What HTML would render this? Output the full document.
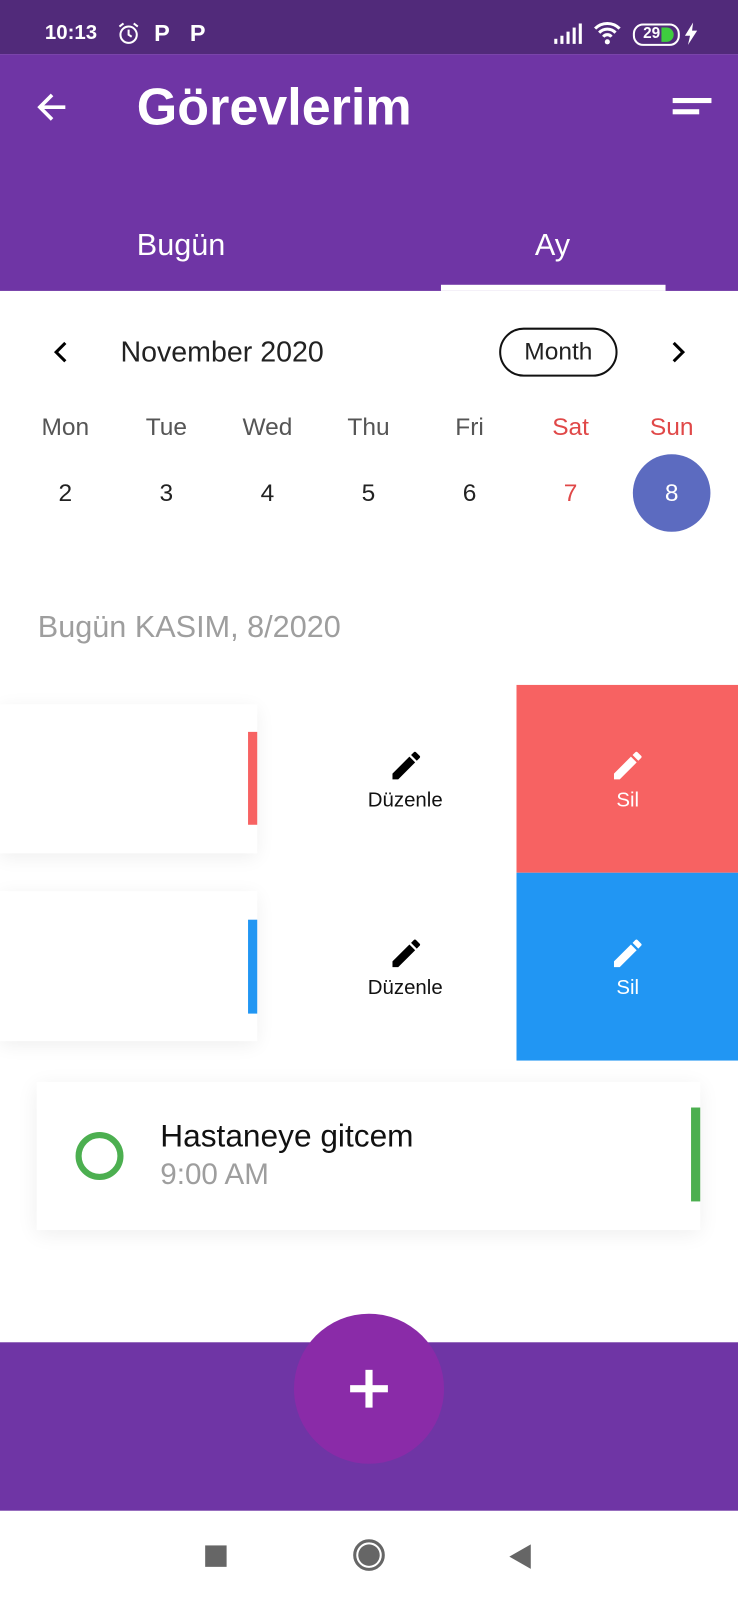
<!DOCTYPE html>
<html><head><meta charset="utf-8"><style>
html,body{margin:0;padding:0;width:738px;height:1600px;overflow:hidden;background:#fff}
#w{position:absolute;left:0;top:0;width:723px;height:1568px;transform:scale(1.02075);transform-origin:0 0;font-family:"Liberation Sans",sans-serif;}
.a{position:absolute}
.c{position:absolute;text-align:center}
</style></head><body><div id="w">
<div class="a" style="left:0;top:0;width:723px;height:53px;background:#512a7a"></div>
<div class="a" style="left:44px;top:21px;color:#fff;font-size:20px;font-weight:bold">10:13</div>
<svg class="a" style="left:114px;top:20px" width="24" height="26" viewBox="0 0 24 26"><circle cx="12" cy="14" r="8" fill="none" stroke="#fff" stroke-width="2"/><path d="M12 9v5l3 2M3 6l4-3M21 6l-4-3" stroke="#fff" stroke-width="2" fill="none"/></svg>
<div class="a" style="left:151px;top:19px;color:#fff;font-size:23px;font-weight:bold">P</div>
<div class="a" style="left:186px;top:19px;color:#fff;font-size:23px;font-weight:bold">P</div>
<svg class="a" style="left:542px;top:22px" width="30" height="22"><rect x="1" y="16" width="3" height="5" fill="#fff"/><rect x="7" y="13" width="3" height="8" fill="#fff"/><rect x="13" y="9" width="3" height="12" fill="#fff"/><rect x="19" y="5" width="3" height="16" fill="#fff"/><rect x="25" y="1" width="3" height="20" fill="#fff"/></svg>
<svg class="a" style="left:581px;top:20px" width="28" height="24" viewBox="0 0 28 24"><path d="M2 8a17 17 0 0 1 24 0M6 12a11 11 0 0 1 16 0M10 16a5 5 0 0 1 8 0" stroke="#fff" stroke-width="3" fill="none"/><circle cx="14" cy="21" r="2.5" fill="#fff"/></svg>
<div class="a" style="left:620px;top:23px;width:42px;height:18px;border:2px solid #fff;border-radius:10px;"></div>
<div class="a" style="left:648px;top:27px;width:12px;height:14px;background:#3ecc3e;border-radius:0 7px 7px 0"></div>
<div class="a" style="left:630px;top:24px;color:#fff;font-size:15px;font-weight:bold">29</div>
<svg class="a" style="left:669px;top:21px" width="16" height="24" viewBox="0 0 16 24"><path d="M10 1L2 14h5l-2 9 9-14H9z" fill="#fff"/></svg>
<div class="a" style="left:0;top:53px;width:723px;height:232px;background:#6f35a5"></div>
<svg class="a" style="left:34px;top:88px" width="34" height="34" viewBox="0 0 34 34"><path d="M30 17H5M17 5L5 17l12 12" stroke="#fff" stroke-width="3.5" fill="none"/></svg>
<div class="a" style="left:134px;top:75px;color:#fff;font-size:51px;font-weight:bold">Görevlerim</div>
<div class="a" style="left:659px;top:96px;width:38px;height:5px;background:#fff"></div>
<div class="a" style="left:659px;top:107px;width:26px;height:5px;background:#fff"></div>
<div class="a" style="left:134px;top:224px;color:#fff;font-size:30px">Bugün</div>
<div class="a" style="left:524px;top:224px;color:#fff;font-size:30px">Ay</div>
<div class="a" style="left:432px;top:279px;width:220px;height:6px;background:#fff"></div>
<svg class="a" style="left:48px;top:332px" width="24" height="26"><path d="M16 4L7 13l9 9" stroke="#000" stroke-width="3" fill="none"/></svg>
<div class="a" style="left:118px;top:329px;font-size:28px;color:#222">November 2020</div>
<div class="a" style="left:489px;top:321px;width:112px;height:44px;border:2px solid #111;border-radius:24px;text-align:center;line-height:44px;font-size:24px;color:#222">Month</div>
<svg class="a" style="left:652px;top:332px" width="24" height="26"><path d="M8 4l9 9-9 9" stroke="#000" stroke-width="3" fill="none"/></svg>
<div class="a" style="left:0;top:405px;width:723px;font-size:24px;color:#555">
<span class="c" style="left:14px;width:100px">Mon</span><span class="c" style="left:113px;width:100px">Tue</span><span class="c" style="left:212px;width:100px">Wed</span><span class="c" style="left:311px;width:100px">Thu</span><span class="c" style="left:410px;width:100px">Fri</span><span class="c" style="left:509px;width:100px;color:#e04848">Sat</span><span class="c" style="left:608px;width:100px;color:#e04848">Sun</span></div>
<div class="a" style="left:620px;top:445px;width:76px;height:76px;border-radius:50%;background:#5c6bc0"></div>
<div class="a" style="left:0;top:470px;width:723px;font-size:24px;color:#222">
<span class="c" style="left:14px;width:100px">2</span><span class="c" style="left:113px;width:100px">3</span><span class="c" style="left:212px;width:100px">4</span><span class="c" style="left:311px;width:100px">5</span><span class="c" style="left:410px;width:100px">6</span><span class="c" style="left:509px;width:100px;color:#e04848">7</span><span class="c" style="left:608px;width:100px;color:#fff">8</span></div>
<div class="a" style="left:37px;top:598px;font-size:30px;color:#9e9e9e">Bugün KASIM, 8/2020</div>
<div class="a" style="left:0;top:690px;width:252px;height:146px;background:#fff;box-shadow:0 4px 18px rgba(0,0,0,.07)"></div>
<div class="a" style="left:243px;top:717px;width:9px;height:91px;background:#f76262"></div>
<div class="a" style="left:0;top:873px;width:252px;height:147px;background:#fff;box-shadow:0 4px 18px rgba(0,0,0,.07)"></div>
<div class="a" style="left:243px;top:901px;width:9px;height:92px;background:#2196f3"></div>
<div class="a" style="left:506px;top:671px;width:217px;height:184px;background:#f76262"></div>
<div class="a" style="left:506px;top:855px;width:217px;height:184px;background:#2196f3"></div>
<svg class="a" style="left:380px;top:732px" width="36" height="36" viewBox="0 0 24 24"><path d="M3 17.25V21h3.75L17.81 9.94l-3.75-3.75L3 17.25zM20.71 7.04a1 1 0 0 0 0-1.41l-2.34-2.34a1 1 0 0 0-1.41 0l-1.83 1.83 3.75 3.75 1.83-1.83z" fill="#000"/></svg>
<svg class="a" style="left:380px;top:916px" width="36" height="36" viewBox="0 0 24 24"><path d="M3 17.25V21h3.75L17.81 9.94l-3.75-3.75L3 17.25zM20.71 7.04a1 1 0 0 0 0-1.41l-2.34-2.34a1 1 0 0 0-1.41 0l-1.83 1.83 3.75 3.75 1.83-1.83z" fill="#000"/></svg>
<svg class="a" style="left:597px;top:732px" width="36" height="36" viewBox="0 0 24 24"><path d="M3 17.25V21h3.75L17.81 9.94l-3.75-3.75L3 17.25zM20.71 7.04a1 1 0 0 0 0-1.41l-2.34-2.34a1 1 0 0 0-1.41 0l-1.83 1.83 3.75 3.75 1.83-1.83z" fill="#fff"/></svg>
<svg class="a" style="left:597px;top:916px" width="36" height="36" viewBox="0 0 24 24"><path d="M3 17.25V21h3.75L17.81 9.94l-3.75-3.75L3 17.25zM20.71 7.04a1 1 0 0 0 0-1.41l-2.34-2.34a1 1 0 0 0-1.41 0l-1.83 1.83 3.75 3.75 1.83-1.83z" fill="#fff"/></svg>
<div class="c" style="left:337px;top:773px;width:120px;font-size:20px;color:#111">Düzenle</div>
<div class="c" style="left:337px;top:957px;width:120px;font-size:20px;color:#111">Düzenle</div>
<div class="c" style="left:555px;top:773px;width:120px;font-size:20px;color:#fff">Sil</div>
<div class="c" style="left:555px;top:957px;width:120px;font-size:20px;color:#fff">Sil</div>
<div class="a" style="left:36px;top:1060px;width:650px;height:145px;background:#fff;box-shadow:0 4px 20px rgba(0,0,0,.07)"></div>
<div class="a" style="left:74px;top:1109px;width:35px;height:35px;border:6px solid #4caf50;border-radius:50%"></div>
<div class="a" style="left:157px;top:1095px;font-size:31px;color:#111">Hastaneye gitcem</div>
<div class="a" style="left:157px;top:1135px;font-size:29px;color:#9e9e9e">9:00 AM</div>
<div class="a" style="left:677px;top:1085px;width:9px;height:92px;background:#4caf50"></div>
<div class="a" style="left:0;top:1315px;width:723px;height:165px;background:#6f35a5"></div>
<div class="a" style="left:288px;top:1287px;width:147px;height:147px;border-radius:50%;background:#8a2ba8"></div>
<div class="a" style="left:343px;top:1357px;width:37px;height:7px;background:#fff"></div>
<div class="a" style="left:358px;top:1342px;width:7px;height:37px;background:#fff"></div>
<div class="a" style="left:201px;top:1514px;width:21px;height:21px;background:#666"></div>
<div class="a" style="left:346px;top:1508px;width:31px;height:31px;border:3px solid #666;border-radius:50%;box-sizing:border-box"></div>
<div class="a" style="left:351px;top:1513px;width:21px;height:21px;background:#666;border-radius:50%"></div>
<div class="a" style="left:499px;top:1513px;width:0;height:0;border-top:12px solid transparent;border-bottom:12px solid transparent;border-right:21px solid #666"></div>
</div></body></html>
